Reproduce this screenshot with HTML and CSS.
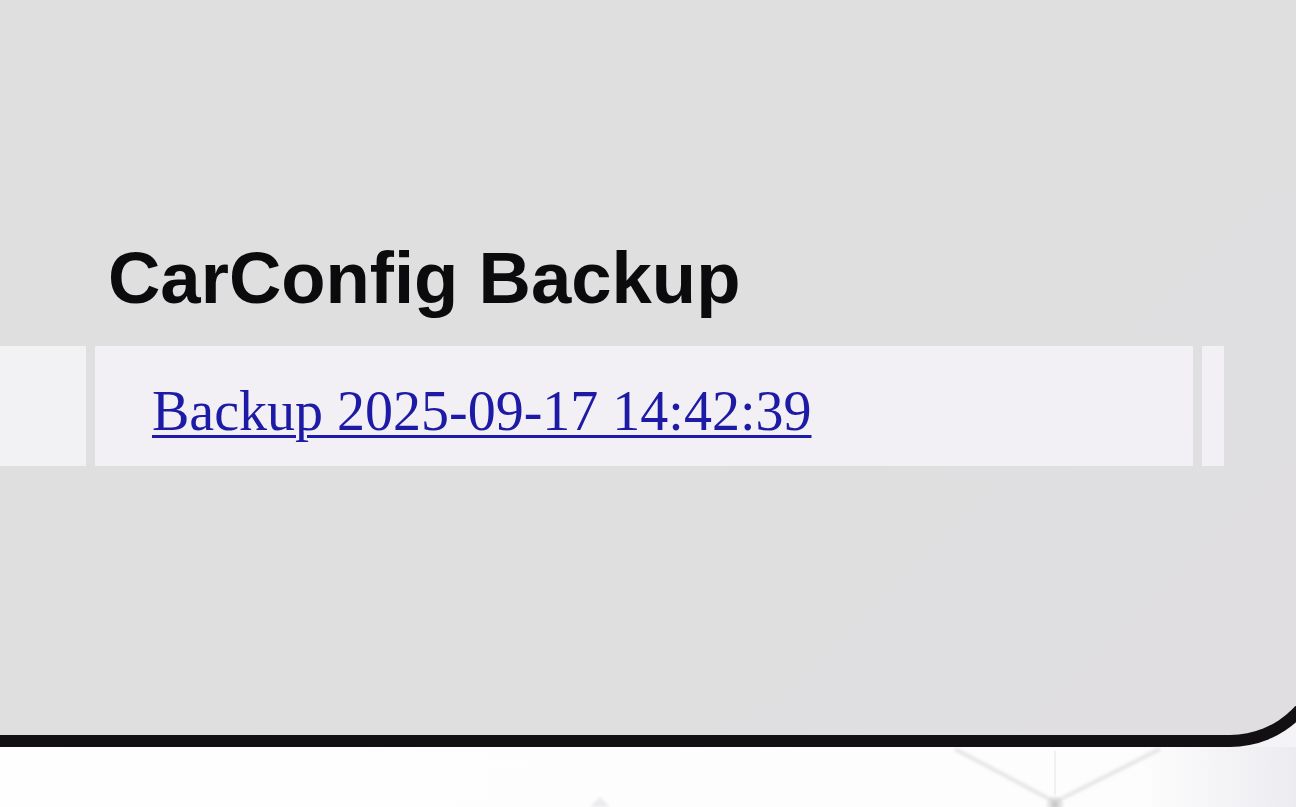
FILE: index.html
```html
<!DOCTYPE html>
<html lang="en">
<head>
<meta charset="utf-8">
<title>CarConfig Backup</title>
<link rel="stylesheet" href="styles.css">
</head>
<body>
  <div class="frame">
    <h2 class="title">CarConfig Backup</h2>
    <div class="row">
      <div class="cell cell-side"></div>
      <div class="cell cell-main"><a class="backup-link" href="#">Backup 2025-09-17 14:42:39</a></div>
      <div class="cell cell-end"></div>
    </div>
  </div>
  <div class="below">
    <svg class="deco" width="1296" height="60" viewBox="0 0 1296 60" aria-hidden="true">
      <defs>
        <filter id="soft" x="-20%" y="-20%" width="140%" height="140%">
          <feGaussianBlur stdDeviation="1.5"/>
        </filter>
        <radialGradient id="blob" cx="50%" cy="50%" r="50%">
          <stop offset="0" stop-color="#c4c3c6"/>
          <stop offset="1" stop-color="#c4c3c6" stop-opacity="0"/>
        </radialGradient>
      </defs>
      <g filter="url(#soft)" stroke="#e6e5e8" stroke-width="4" fill="none">
        <line x1="955" y1="2" x2="1055" y2="55"/>
        <line x1="1160" y1="2" x2="1055" y2="55"/>
      </g>
      <line x1="1055" y1="4" x2="1055" y2="48" stroke="#e8e7ea" stroke-width="1.2"/>
      <circle cx="1055" cy="58" r="10" fill="url(#blob)"/>
      <path d="M590 60 L600 50 L610 60 Z" fill="#ebeaed" filter="url(#soft)"/>
    </svg>
  </div>
</body>
</html>
```

FILE: styles.css
```css
html, body {
  margin: 0;
  padding: 0;
  overflow: hidden;
}

body {
  width: 1296px;
  height: 807px;
  background: #f4f3f6;
  font-family: "Liberation Serif", "Times New Roman", serif;
}

.frame {
  box-sizing: border-box;
  width: 1330px;
  height: 747px;
  padding-top: 236px;
  background: linear-gradient(135deg, #dfdfdf 0%, #dfdfdf 45%, #e0dee1 100%);
  border-right: 12px solid #121012;
  border-bottom: 12px solid #121012;
  border-bottom-right-radius: 100px;
}

.title {
  margin: 0 0 27px 108px;
  font-family: "Liberation Sans", Arial, sans-serif;
  font-weight: bold;
  font-size: 72.5px;
  line-height: 83px;
  color: #0b0a0c;
}

.row {
  display: grid;
  grid-template-columns: 86px 1098px 22px;
  column-gap: 9px;
  height: 120px;
}

.cell {
  background: #f2f1f3;
}

.cell-main {
  background: #f3f0f5;
  display: flex;
  align-items: center;
  padding-left: 57px;
  padding-top: 10px;
}

.cell-end {
  background: #f3f0f5;
}

.backup-link {
  font-family: "Liberation Serif", "Times New Roman", serif;
  font-size: 56px;
  line-height: 64px;
  color: #1d1aa6;
  text-decoration: underline;
  text-decoration-thickness: 3px;
  text-underline-offset: 5px;
}

.below {
  height: 60px;
  background: linear-gradient(to right, #fefefe 0%, #fdfdfd 88%, #ecebf0 100%);
}

.deco {
  display: block;
}
```
